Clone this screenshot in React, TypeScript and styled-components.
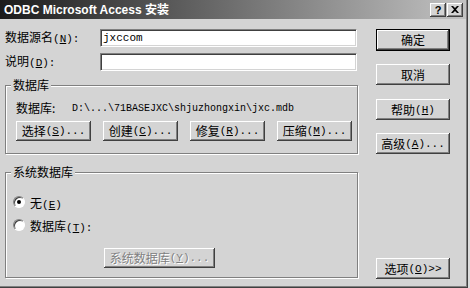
import React from "react";
import styled, { createGlobalStyle } from "styled-components";

const GlobalStyle = createGlobalStyle`
  html, body {
    margin: 0;
    padding: 0;
    background: #dcdcdc;
  }
  body {
    font-family: "Noto Sans CJK SC", "Liberation Sans", sans-serif;
    font-size: 12px;
    color: #000;
  }
`;

const FACE = "#d4d4d4";

const Window = styled.div`
  width: 468px;
  height: 288px;
  box-sizing: border-box;
  background: ${FACE};
  border-right: 1px solid #404040;
  border-bottom: 1px solid #404040;
  box-shadow: inset -1px -1px 0 #808080;
  display: flex;
  flex-direction: column;
`;

const TitleBar = styled.div`
  height: 19px;
  width: 466px;
  display: flex;
  align-items: center;
  background: linear-gradient(to right, #1c1c1c, #c2c2c2);
  padding-left: 4px;
  padding-right: 3px;
  box-sizing: border-box;
`;

const Title = styled.span`
  color: #fff;
  font-family: "Liberation Sans", "Noto Sans CJK SC", sans-serif;
  font-weight: bold;
  font-size: 12px;
  line-height: 14px;
  flex: 1;
`;

const CaptionButton = styled.div<{ $gap?: number }>`
  width: 16px;
  height: 14px;
  box-sizing: border-box;
  margin-left: ${(p) => p.$gap ?? 0}px;
  background: ${FACE};
  box-shadow: inset -1px -1px 0 #404040, inset 1px 1px 0 #fff, inset -2px -2px 0 #808080;
  display: flex;
  align-items: center;
  justify-content: center;
  font-family: "Liberation Sans", sans-serif;
  font-weight: bold;
  font-size: 11px;
  line-height: 12px;
`;

const Body = styled.div`
  display: flex;
  padding: 10px 0 0 5px;
`;

const LeftCol = styled.div`
  width: 353px;
  display: flex;
  flex-direction: column;
`;

const RightCol = styled.div`
  width: 74px;
  margin-left: 18px;
  display: flex;
  flex-direction: column;
`;

const FieldRow = styled.div<{ $top?: number }>`
  display: flex;
  align-items: center;
  height: 18px;
  margin-top: ${(p) => p.$top ?? 0}px;
`;

const Label = styled.span<{ $w: number }>`
  width: ${(p) => p.$w}px;
  flex-shrink: 0;
  white-space: nowrap;
  line-height: 14px;
`;

const Ascii = styled.span`
  font-family: "Liberation Mono", monospace;
  font-size: 11px;
`;

const TextBox = styled.input`
  width: 257px;
  height: 18px;
  box-sizing: border-box;
  margin: 0;
  padding: 0 2px;
  background: #fff;
  border: 1px solid;
  border-color: #808080 #fff #fff #808080;
  box-shadow: inset 1px 1px 0 #404040, inset -1px -1px 0 ${FACE};
  font-family: "Liberation Mono", monospace;
  font-size: 11px;
  color: #000;
  outline: none;
`;

const Group = styled.div<{ $top: number; $h: number }>`
  position: relative;
  margin-top: ${(p) => p.$top}px;
  height: ${(p) => p.$h}px;
  box-sizing: border-box;
  border: 1px solid #808080;
  box-shadow: inset 1px 1px 0 #fff, 1px 1px 0 #fff;
`;

const GroupTitle = styled.span`
  position: absolute;
  top: -8px;
  left: 5px;
  padding: 0 2px;
  background: ${FACE};
  line-height: 14px;
`;

const PathRow = styled.div`
  display: flex;
  align-items: center;
  height: 14px;
  margin: 15px 0 0 10px;
`;

const PathText = styled.span`
  font-family: "Liberation Mono", monospace;
  font-size: 10px;
`;

const ButtonRow = styled.div`
  display: flex;
  gap: 12px;
  margin: 6px 0 0 10px;
`;

const Button = styled.div<{
  $w?: number;
  $h?: number;
  $top?: number;
  $left?: number;
  $default?: boolean;
  $disabled?: boolean;
}>`
  width: ${(p) => (p.$w ? `${p.$w}px` : "100%")};
  height: ${(p) => p.$h ?? (p.$default ? 22 : 21)}px;
  margin-top: ${(p) => p.$top ?? 0}px;
  margin-left: ${(p) => p.$left ?? 0}px;
  box-sizing: border-box;
  flex-shrink: 0;
  display: flex;
  align-items: center;
  justify-content: center;
  white-space: nowrap;
  line-height: 14px;
  background: ${FACE};
  border: ${(p) => (p.$default ? "1px solid #000" : "none")};
  box-shadow: inset -1px -1px 0 #404040, inset 1px 1px 0 #fff, inset -2px -2px 0 #808080;
  color: ${(p) => (p.$disabled ? "#808080" : "#000")};
  text-shadow: ${(p) => (p.$disabled ? "1px 1px 0 #fff" : "none")};
`;

const RadioRow = styled.div<{ $top: number }>`
  display: flex;
  align-items: center;
  height: 14px;
  margin: ${(p) => p.$top}px 0 0 7px;
  gap: 5px;
`;

const Radio = styled.span<{ $on?: boolean }>`
  width: 12px;
  height: 12px;
  box-sizing: border-box;
  border-radius: 50%;
  border: 1px solid;
  border-color: #808080 #fff #fff #808080;
  box-shadow: inset 1px 1px 0 #404040;
  background: #fff;
  display: flex;
  align-items: center;
  justify-content: center;
  &::after {
    content: "";
    width: 4px;
    height: 4px;
    border-radius: 50%;
    background: ${(p) => (p.$on ? "#000" : "transparent")};
  }
`;

const Key = ({ k, tail = "" }: { k: string; tail?: string }) => (
  <Ascii>
    (<u>{k}</u>){tail}
  </Ascii>
);

const dbActions = [
  { name: "选择", key: "S" },
  { name: "创建", key: "C" },
  { name: "修复", key: "R" },
  { name: "压缩", key: "M" },
];

export default function App() {
  return (
    <>
      <GlobalStyle />
      <Window>
        <TitleBar>
          <Title>ODBC Microsoft Access 安装</Title>
          <CaptionButton>?</CaptionButton>
          <CaptionButton $gap={1}>
            <svg width="8" height="7" viewBox="0 0 8 7">
              <path d="M0 0 L2 0 L4 2 L6 0 L8 0 L5 3.5 L8 7 L6 7 L4 5 L2 7 L0 7 L3 3.5 Z" fill="#000" />
            </svg>
          </CaptionButton>
        </TitleBar>
        <Body>
          <LeftCol>
            <FieldRow>
              <Label $w={95}>
                数据源名<Key k="N" tail=":" />
              </Label>
              <TextBox readOnly value="jxccom" />
            </FieldRow>
            <FieldRow $top={6}>
              <Label $w={95}>
                说明<Key k="D" tail=":" />
              </Label>
              <TextBox readOnly value="" />
            </FieldRow>

            <Group $top={14} $h={69}>
              <GroupTitle>数据库</GroupTitle>
              <PathRow>
                <Label $w={56}>数据库:</Label>
                <PathText>D:\...\71BASEJXC\shjuzhongxin\jxc.mdb</PathText>
              </PathRow>
              <ButtonRow>
                {dbActions.map((a) => (
                  <Button key={a.key} $w={75} $h={20}>
                    {a.name}
                    <Key k={a.key} tail="..." />
                  </Button>
                ))}
              </ButtonRow>
            </Group>

            <Group $top={18} $h={106}>
              <GroupTitle>系统数据库</GroupTitle>
              <RadioRow $top={22}>
                <Radio $on />
                <span>
                  无<Key k="E" />
                </span>
              </RadioRow>
              <RadioRow $top={9}>
                <Radio />
                <span>
                  数据库<Key k="T" tail=":" />
                </span>
              </RadioRow>
              <Button $w={111} $h={20} $top={16} $left={98} $disabled>
                系统数据库<Key k="Y" tail="..." />
              </Button>
            </Group>
          </LeftCol>

          <RightCol>
            <Button $default>确定</Button>
            <Button $top={13}>取消</Button>
            <Button $top={14}>
              帮助<Key k="H" />
            </Button>
            <Button $top={13}>
              高级<Key k="A" tail="..." />
            </Button>
            <Button $top={104}>
              选项<Key k="O" tail=">>" />
            </Button>
          </RightCol>
        </Body>
      </Window>
    </>
  );
}
